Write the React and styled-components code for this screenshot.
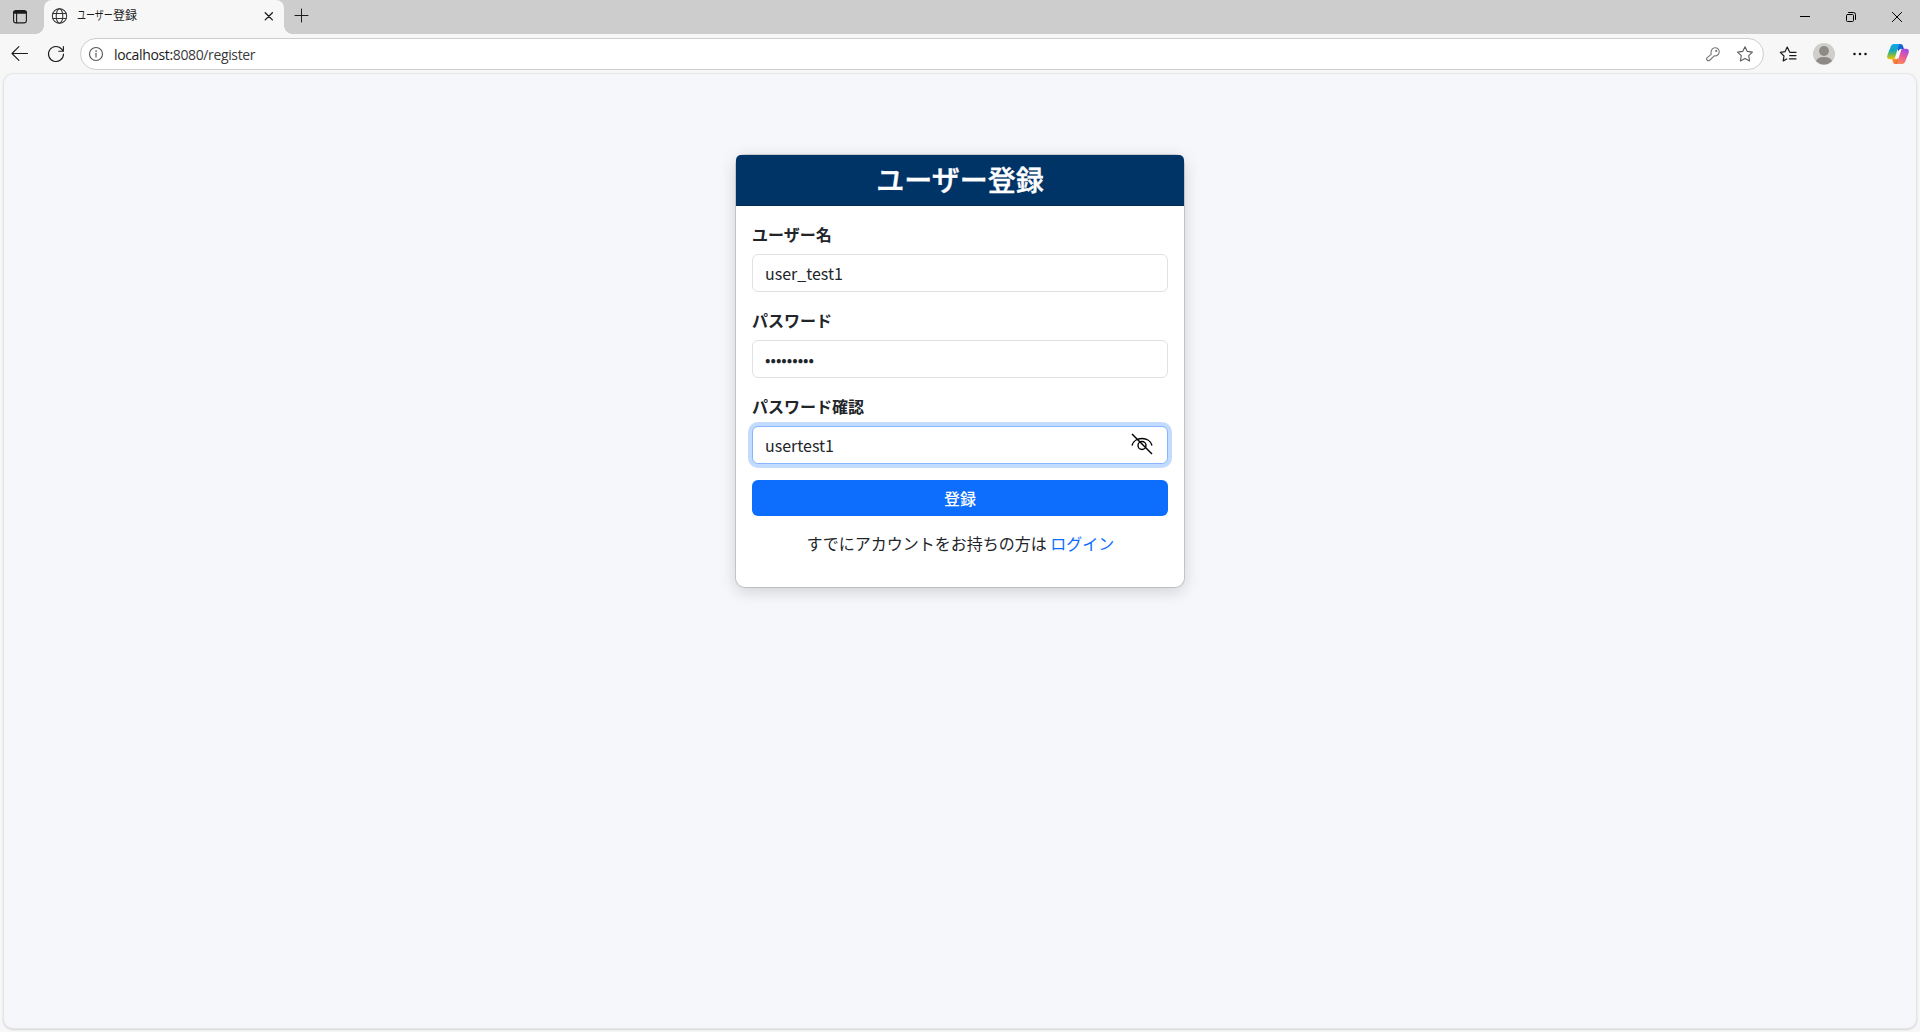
import React from "react";
import styled, { createGlobalStyle } from "styled-components";

const GlobalStyle = createGlobalStyle`
  *, *::before, *::after { box-sizing: border-box; }
  html, body, #root { height: 100%; }
  body { margin: 0; overflow: hidden; background: #f7f7f7; }
`;

const Browser = styled.div`
  display: flex;
  flex-direction: column;
  height: 100vh;
  background: #f7f7f7;
  font-family: "Noto Sans", "Noto Sans CJK JP", sans-serif;
`;

const TitleBar = styled.div`
  display: flex;
  height: 34px;
  background: #cdcdcd;
`;

const Cell = styled.div`
  display: flex;
  align-items: center;
  justify-content: center;
  width: ${(p) => p.$w}px;
  padding-bottom: ${(p) => p.$lift || 0}px;
  flex: none;
  svg { display: block; }
`;

const Tab = styled.div`
  position: relative;
  display: flex;
  align-items: center;
  width: 240px;
  padding: 0 9px 2px 7px;
  background: #f7f7f7;
  border-radius: 8px 8px 0 0;
  &::before, &::after {
    content: "";
    position: absolute;
    bottom: 0;
    width: 8px;
    height: 8px;
  }
  &::before { left: -8px; background: radial-gradient(circle at 0 0, transparent 7.5px, #f7f7f7 8px); }
  &::after { right: -8px; background: radial-gradient(circle at 100% 0, transparent 7.5px, #f7f7f7 8px); }
`;

const TabTitle = styled.span`
  display: flex;
  flex: 1;
  margin-left: 9px;
  font-size: 12px;
  line-height: 16px;
  color: #1b1b1b;
`;

const NarrowKana = styled.span`
  width: 36px;
  white-space: nowrap;
  transform: scaleX(0.75);
  transform-origin: 0 50%;
`;

const Spacer = styled.div`
  flex: 1;
`;

const Toolbar = styled.div`
  display: flex;
  align-items: center;
  height: 40px;
`;

const AddressBar = styled.div`
  display: flex;
  align-items: center;
  flex: 1;
  height: 32px;
  padding-right: 2px;
  background: #fff;
  border: 1px solid #cdcdcd;
  border-radius: 16px;
`;

const Url = styled.span`
  flex: 1;
  margin-left: 3px;
  padding-top: 1px;
  font-family: "Open Sans", "Noto Sans", sans-serif;
  font-size: 14px;
  line-height: 20px;
  letter-spacing: -0.36px;
  color: #3a3a3a;
  b { font-weight: 400; color: #1a1a1a; }
`;

const Page = styled.main`
  flex: 1;
  margin: 0 4px 4px;
  padding-top: 80px;
  background: #f5f7fb;
  border-radius: 9px;
  box-shadow: 0 0 0 1px #e6e6e6, 0 1px 2px 1px rgba(0, 0, 0, 0.14);
  font-family: "Noto Sans CJK JP", "Noto Sans", sans-serif;
  font-size: 16px;
  line-height: 24px;
  color: #212529;
`;

const Card = styled.section`
  width: 450px;
  margin: 0 auto;
  background: #fff;
  background-clip: padding-box;
  border: 1px solid rgba(0, 0, 0, 0.14);
  border-radius: 10px;
  box-shadow: 0 4px 16px rgba(0, 0, 0, 0.15);
`;

const CardHeader = styled.h1`
  display: flex;
  align-items: center;
  justify-content: center;
  height: 51px;
  margin: 0;
  padding-bottom: 2px;
  background: #003366;
  border-bottom: 1px solid #002c58;
  border-radius: 5px 5px 0 0;
  color: #fff;
  font-size: 28px;
  font-weight: 500;
  line-height: 34px;
  -webkit-text-stroke: 0.4px #fff;
`;

const Form = styled.form`
  display: flex;
  flex-direction: column;
  gap: 16px;
  padding: 16px 16px 32px;
`;

const Field = styled.div`
  display: flex;
  flex-direction: column;
  gap: 8px;
`;

const Label = styled.label`
  font-weight: 700;
`;

const InputBox = styled.div`
  display: flex;
  align-items: center;
  height: 38px;
  padding: 0 12px;
  background: #fff;
  border: 1px solid ${(p) => (p.$focused ? "#86b7fe" : "#dee2e6")};
  border-radius: 6px;
  box-shadow: ${(p) => (p.$focused ? "0 0 0 4px #c2dbfe" : "none")};
`;

const Input = styled.input`
  flex: 1;
  min-width: 0;
  height: 24px;
  padding: 0;
  border: 0;
  outline: 0;
  background: transparent;
  color: #212529;
  font: inherit;
`;

const Submit = styled.button`
  height: 36px;
  padding: 0;
  border: 0;
  border-radius: 6px;
  background: #0d6efd;
  color: #fff;
  font: inherit;
  font-weight: 500;
`;

const Hint = styled.p`
  margin: -1px 0 0;
  padding-left: 1px;
  text-align: center;
`;

const Link = styled.a`
  color: #0d6efd;
  text-decoration: none;
`;

const Svg = ({ s = 16, w = s, h = s, sw = 1.1, c = "#1b1b1b", children }) => (
  <svg width={w} height={h} viewBox={`0 0 ${w} ${h}`} fill="none" stroke={c} strokeWidth={sw} strokeLinecap="round" strokeLinejoin="round">
    {children}
  </svg>
);

const TabActions = () => (
  <Svg s={16}>
    <rect x="1.6" y="1.6" width="12.8" height="12.3" rx="2.4" />
    <path d="M2.6 3.3h10.8" strokeWidth="3" />
    <path d="M4.6 4v9.6" />
  </Svg>
);

const Globe = () => (
  <Svg s={18} c="#333" sw={1.1}>
    <circle cx="9" cy="9" r="7.6" />
    <ellipse cx="9" cy="9" rx="3.5" ry="7.6" />
    <path d="M2 6.3h14M2 11.7h14" />
  </Svg>
);

const Back = () => (
  <Svg s={18} sw={1.1}>
    <path d="M16.500 8.500H1.200M7.900 1.700L1 8.500l6.900 6.800" />
  </Svg>
);

const Refresh = () => (
  <Svg s={18} sw={1.1}>
    <path d="M16.5 9A7.5 7.5 0 1 1 14.9 4.4L16.2 6M16.4 1.6V6.2H11.8" />
  </Svg>
);

const Info = () => (
  <Svg s={16} c="#555">
    <circle cx="8" cy="8" r="6.5" />
    <path d="M8 7.3v3.7" />
    <circle cx="8" cy="5.1" r=".5" fill="#555" strokeWidth=".5" />
  </Svg>
);

const KeyIcon = () => (
  <Svg s={16} c="#777">
    <path d="M6.2 8.4C5.5 5.2 6.8 2 9.8 1.7c2.8-.2 4.5 1.8 4.4 4.2-.1 2.6-2.2 4.4-5 4L5 14c-.8.7-2.300.7-3 0-.6-.7-.5-1.500 0-2.100Z" />
    <circle cx="11.2" cy="4.9" r=".5" />
  </Svg>
);

const starPath = "M9 1.7l2.3 4.7 5.1.7-3.7 3.6.9 5.2L9 13.4l-4.6 2.5.9-5.2L1.6 7.1l5.1-.7Z";

const Star = () => (
  <Svg s={18} c="#5f5f5f">
    <path d={starPath} />
  </Svg>
);

const Favorites = () => (
  <Svg s={18} sw={1.2}>
    <path d="M7.7 14l-3.5 1.9.8-4.9-3.7-3.6 4.8-.8L8.2 2l2.2 4.5M11 7.4h6M10.7 10.6H17M10.3 13.8H17" />
  </Svg>
);

const Avatar = () => (
  <svg width="22" height="22" viewBox="0 0 22 22">
    <defs>
      <clipPath id="avatarClip"><circle cx="11" cy="11" r="10.5" /></clipPath>
    </defs>
    <circle cx="11" cy="11" r="11" fill="#d0cecb" />
    <circle cx="11" cy="8" r="4.9" fill="#8d8986" />
    <ellipse cx="11" cy="18.6" rx="8" ry="4.6" fill="#8d8986" clipPath="url(#avatarClip)" />
  </svg>
);

const More = () => (
  <svg width="16" height="16" viewBox="0 0 16 16" fill="#1b1b1b">
    <circle cx="2.5" cy="8" r="1.3" />
    <circle cx="8" cy="8" r="1.3" />
    <circle cx="13.5" cy="8" r="1.3" />
  </svg>
);

const Copilot = () => (
  <svg width="22" height="20" viewBox="0 0 22 20">
    <defs>
      <linearGradient id="cpLeft" x1="0" y1="0" x2="0" y2="1">
        <stop offset="0" stopColor="#12a5f0" />
        <stop offset=".45" stopColor="#16a9b5" />
        <stop offset=".7" stopColor="#74bc4c" />
        <stop offset="1" stopColor="#f5c400" />
      </linearGradient>
      <linearGradient id="cpRight" x1=".7" y1="0" x2=".3" y2="1">
        <stop offset="0" stopColor="#a04be8" />
        <stop offset=".5" stopColor="#e95a9c" />
        <stop offset="1" stopColor="#fb8a55" />
      </linearGradient>
      <linearGradient id="cpTop" x1="0" y1="0" x2="1" y2="1">
        <stop offset="0" stopColor="#127fe6" />
        <stop offset="1" stopColor="#1747bd" />
      </linearGradient>
      <linearGradient id="cpBottom" x1="0" y1="0" x2="1" y2="1">
        <stop offset="0" stopColor="#fbb02a" />
        <stop offset="1" stopColor="#ee4b3c" />
      </linearGradient>
    </defs>
    <path d="M9 0h4.500c1.300 0 2.100.8 2.500 2l1 3.200h-2.800c-1.400 0-2 .7-2.500 2L9 3Z" fill="url(#cpTop)" />
    <path d="M13 20H8.500c-1.300 0-2.100-.8-2.500-2l-1-3.200h2.800c1.400 0 2-.7 2.500-2L13 17Z" fill="url(#cpBottom)" />
    <path d="M12.800 0H7.200C5 0 4 1.600 3.200 4L.6 10.500C-.6 14 .7 15.300 3 15.300h2.600c1.500 0 2.100-.7 2.600-2.200L11 3.600C11.400 2 11.700.5 12.800 0Z" fill="url(#cpLeft)" />
    <path d="M9.200 20h5.600c2.200 0 3.200-1.600 4-4l2.600-6.500C22.600 6 21.300 4.700 19 4.700h-2.600c-1.500 0-2.100.7-2.600 2.200L11 16.400c-.4 1.600-.7 3.100-1.800 3.600Z" fill="url(#cpRight)" />
    <path d="M12.300 6.200c.5-1 1.200-1.500 2.200-1.500l-3.700 9.200c-.5 1-1.300 1.400-2.400 1.400Z" fill="#fff" />
  </svg>
);

const EyeOff = () => (
  <Svg s={22} c="#000" sw={1.4}>
    <path d="M1 12.500C3.200 3.200 18.800 3.200 21 12.500" strokeLinecap="butt" />
    <circle cx="11" cy="12.500" r="4" />
    <path d="M1 1l20 20" strokeLinecap="butt" />
  </Svg>
);

export default function App() {
  return (
    <>
      <GlobalStyle />
      <Browser>
        <TitleBar>
          <Cell $w={40} $lift={1}><TabActions /></Cell>
          <Cell $w={4} />
          <Tab>
            <Cell $w={17}><Globe /></Cell>
            <TabTitle><NarrowKana>ユーザー</NarrowKana>登録</TabTitle>
            <Cell $w={13}>
              <Svg s={10} sw={1.3}><path d="M1.200 1.700l7.200 7.200M8.400 1.700L1.200 8.900" /></Svg>
            </Cell>
          </Tab>
          <Cell $w={34} $lift={3}>
            <Svg s={15} sw={1}><path d="M7.500 1v13M1 7.500h13" /></Svg>
          </Cell>
          <Spacer />
          <Cell $w={46}><Svg s={10} c="#000" sw={1}><path d="M0 4.500h10" /></Svg></Cell>
          <Cell $w={46}>
            <Svg s={10} c="#000" sw={1}>
              <rect x=".5" y="2.500" width="7" height="7" rx="1" />
              <path d="M2.500.5h5a2 2 0 0 1 2 2v5" />
            </Svg>
          </Cell>
          <Cell $w={46}><Svg s={10} c="#000" sw={1}><path d="M.4.4l9.200 9.200M9.600.4L.4 9.600" /></Svg></Cell>
        </TitleBar>
        <Toolbar>
          <Cell $w={40}><Back /></Cell>
          <Cell $w={32}><Refresh /></Cell>
          <Cell $w={8} />
          <AddressBar>
            <Cell $w={30}><Info /></Cell>
            <Url><b>localhost:</b>8080/register</Url>
            <Cell $w={32}><KeyIcon /></Cell>
            <Cell $w={32}><Star /></Cell>
          </AddressBar>
          <Cell $w={6} />
          <Cell $w={36}><Favorites /></Cell>
          <Cell $w={36}><Avatar /></Cell>
          <Cell $w={36}><More /></Cell>
          <Cell $w={9} />
          <Copilot />
          <Cell $w={11} />
        </Toolbar>
        <Page>
          <Card>
            <CardHeader>ユーザー登録</CardHeader>
            <Form onSubmit={(e) => e.preventDefault()}>
              <Field>
                <Label htmlFor="username">ユーザー名</Label>
                <InputBox><Input id="username" defaultValue="user_test1" /></InputBox>
              </Field>
              <Field>
                <Label htmlFor="password">パスワード</Label>
                <InputBox><Input id="password" type="password" defaultValue="usertest1" /></InputBox>
              </Field>
              <Field>
                <Label htmlFor="confirm">パスワード確認</Label>
                <InputBox $focused>
                  <Input id="confirm" defaultValue="usertest1" />
                  <Cell $w={27} $lift={2}><EyeOff /></Cell>
                </InputBox>
              </Field>
              <Submit>登録</Submit>
              <Hint>すでにアカウントをお持ちの方は <Link href="#">ログイン</Link></Hint>
            </Form>
          </Card>
        </Page>
      </Browser>
    </>
  );
}
